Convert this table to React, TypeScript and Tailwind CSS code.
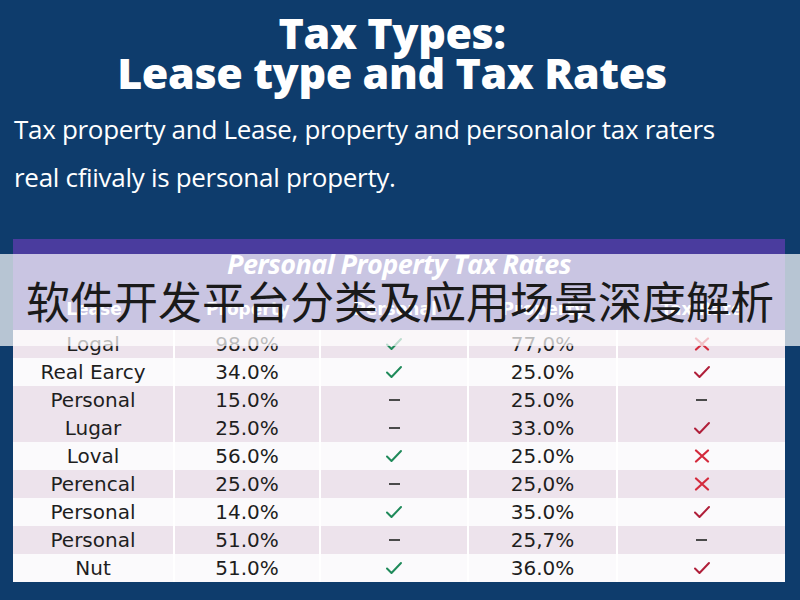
type Mark = 'check' | 'dash' | 'cross'

type Row = {
  name: string
  rateA: string
  markA: Mark
  rateB: string
  markB: Mark
  tint: boolean
}

const rows: Row[] = [
  { name: 'Logal', rateA: '98.0%', markA: 'check', rateB: '77,0%', markB: 'cross', tint: true },
  { name: 'Real Earcy', rateA: '34.0%', markA: 'check', rateB: '25.0%', markB: 'check', tint: false },
  { name: 'Personal', rateA: '15.0%', markA: 'dash', rateB: '25.0%', markB: 'dash', tint: true },
  { name: 'Lugar', rateA: '25.0%', markA: 'dash', rateB: '33.0%', markB: 'check', tint: true },
  { name: 'Loval', rateA: '56.0%', markA: 'check', rateB: '25.0%', markB: 'cross', tint: false },
  { name: 'Perencal', rateA: '25.0%', markA: 'dash', rateB: '25,0%', markB: 'cross', tint: true },
  { name: 'Personal', rateA: '14.0%', markA: 'check', rateB: '35.0%', markB: 'check', tint: false },
  { name: 'Personal', rateA: '51.0%', markA: 'dash', rateB: '25,7%', markB: 'dash', tint: true },
  { name: 'Nut', rateA: '51.0%', markA: 'check', rateB: '36.0%', markB: 'check', tint: false },
]

function MarkIcon({ kind, tone }: { kind: Mark; tone: 'green' | 'red' }) {
  if (kind === 'dash') {
    return <span className="block h-[2px] w-[11px] bg-[#4a4a4a]" />
  }
  const color = tone === 'green' ? '#1f8a5a' : kind === 'cross' ? '#d42a3c' : '#b01f3a'
  if (kind === 'check') {
    return (
      <svg width="18" height="14" viewBox="0 0 18 14" fill="none" aria-hidden>
        <path d="M2 7.5l4.5 4.5L16 2" stroke={color} strokeWidth={2} strokeLinecap="round" strokeLinejoin="round" />
      </svg>
    )
  }
  return (
    <svg width="16" height="14" viewBox="0 0 16 14" fill="none" aria-hidden>
      <path d="M2 1.5l12 11M14 1.5l-12 11" stroke={color} strokeWidth={2.2} strokeLinecap="round" />
    </svg>
  )
}

const cols = 'grid grid-cols-[162px_146px_148px_149px_1fr]'

export default function App() {
  return (
    <div className="relative h-[600px] w-[800px] overflow-hidden bg-[#0e3c6c] font-['Open_Sans',sans-serif]">
      <h1 className="pr-[16px] pt-[13px] text-center text-[43px] font-extrabold leading-[40px] tracking-[-0.4px] text-white">
        Tax Types:
        <br />
        Lease type and Tax Rates
      </h1>

      <div className="mt-[12px] pl-[14px] text-[26px] leading-[48px] tracking-[-0.3px] text-white">
        <p>Tax property and Lease, property and personalor tax raters</p>
        <p>real cfiivaly is personal property.</p>
      </div>

      <div className="mx-[13px] mt-[38px] w-[772px] bg-[#fbfafc] font-['DejaVu_Sans',sans-serif]">
        <div className="bg-[#4a3c9e]">
          <div className="flex h-[50px] items-center justify-center font-['Open_Sans',sans-serif] text-[27px] font-bold italic tracking-[-0.6px] text-white">
            Personal Property Tax Rates
          </div>
          <div className={`${cols} h-[41px] items-center text-center text-[17px] font-bold text-white`}>
            <span>Lease</span>
            <span>Property</span>
            <span>Personal</span>
            <span>Property</span>
            <span>Tax Rate</span>
          </div>
        </div>

        {rows.map((r, i) => (
          <div
            key={i}
            className={[
              cols,
              'h-[28px] items-center text-center text-[20px] leading-none text-[#1e1e1e]',
              r.tint ? 'bg-[#ede3ec]' : 'bg-[#fbfafc]',
            ].join(' ')}
          >
            <span className="flex h-full items-center justify-center border-r-2 border-white">{r.name}</span>
            <span className="flex h-full items-center justify-center border-r-2 border-white">{r.rateA}</span>
            <span className="flex h-full items-center justify-center border-r-2 border-white">
              <MarkIcon kind={r.markA} tone="green" />
            </span>
            <span className="flex h-full items-center justify-center border-r-2 border-white">{r.rateB}</span>
            <span className="flex h-full items-center justify-center">
              <MarkIcon kind={r.markB} tone="red" />
            </span>
          </div>
        ))}
      </div>

      <div className="absolute left-0 top-[254px] flex h-[92px] w-full items-center justify-center bg-white/70">
        <span className="font-['Noto_Sans_CJK_SC',sans-serif] text-[44px] leading-none text-[#1a1a1a]">
          软件开发平台分类及应用场景深度解析
        </span>
      </div>
    </div>
  )
}
